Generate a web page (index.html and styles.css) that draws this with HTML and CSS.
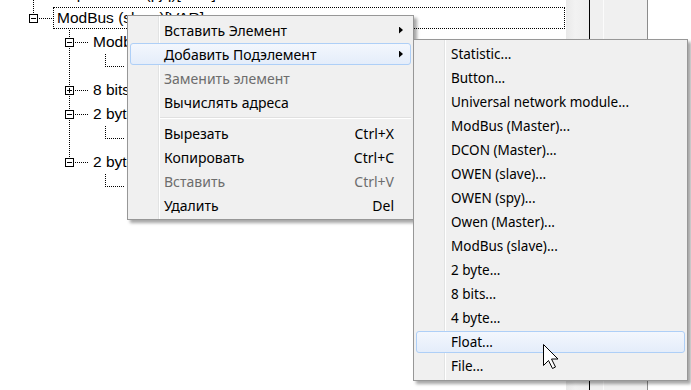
FILE: index.html
```html
<!DOCTYPE html>
<html lang="ru">
<head>
    <meta charset="UTF-8">
    <meta name="viewport" content="width=device-width, initial-scale=1.0">
    <title>Project tree</title>
    <link rel="stylesheet" href="styles.css">
</head>
<body>
    <div class="window">
        <div class="tree">
            <div class="rows">
                <div class="row">
                    <span class="cell tee"></span>
                    <span class="label">Порт COM1 (pjq)[VAR]</span>
                </div>
                <div class="row">
                    <span class="cell elbow"><i class="box"></i></span>
                    <span class="label selected">ModBus (slave)[VAR]</span>
                </div>
                <div class="row">
                    <span class="cell"></span>
                    <span class="cell tee"><i class="box"></i></span>
                    <span class="label">Modbus</span>
                </div>
                <div class="row">
                    <span class="cell"></span>
                    <span class="cell pipe"></span>
                    <span class="cell elbow"></span>
                    <span class="label"></span>
                </div>
                <div class="row">
                    <span class="cell"></span>
                    <span class="cell tee"><i class="box plus"></i></span>
                    <span class="label">8 bits</span>
                </div>
                <div class="row">
                    <span class="cell"></span>
                    <span class="cell tee"><i class="box"></i></span>
                    <span class="label">2 byte</span>
                </div>
                <div class="row">
                    <span class="cell"></span>
                    <span class="cell pipe"></span>
                    <span class="cell elbow"></span>
                    <span class="label"></span>
                </div>
                <div class="row">
                    <span class="cell"></span>
                    <span class="cell elbow"><i class="box"></i></span>
                    <span class="label">2 byte</span>
                </div>
                <div class="row">
                    <span class="cell"></span>
                    <span class="cell"></span>
                    <span class="cell elbow"></span>
                    <span class="label"></span>
                </div>
            </div>
        </div>
        <div class="strip scroll"></div>
        <div class="strip split"></div>
        <div class="strip panel"></div>
        <div class="strip blank"></div>
    </div>

    <!-- context menu -->
    <div class="menu main">
        <div class="item"><span class="text">Вставить Элемент</span><span class="more"></span></div>
        <div class="item hot"><span class="text">Добавить Подэлемент</span><span class="more"></span></div>
        <div class="item off"><span class="text">Заменить элемент</span><span class="none"></span></div>
        <div class="item"><span class="text">Вычислять адреса</span><span class="none"></span></div>
        <div class="sep"></div>
        <div class="item"><span class="text">Вырезать</span><span class="key">Ctrl+X</span><span class="none"></span></div>
        <div class="item"><span class="text">Копировать</span><span class="key">Ctrl+C</span><span class="none"></span></div>
        <div class="item off"><span class="text">Вставить</span><span class="key">Ctrl+V</span><span class="none"></span></div>
        <div class="item"><span class="text">Удалить</span><span class="key">Del</span><span class="none"></span></div>
    </div>

    <!-- submenu -->
    <div class="menu sub">
        <div class="item">Statistic...</div>
        <div class="item">Button...</div>
        <div class="item">Universal network module...</div>
        <div class="item">ModBus (Master)...</div>
        <div class="item">DCON (Master)...</div>
        <div class="item">OWEN (slave)...</div>
        <div class="item">OWEN (spy)...</div>
        <div class="item">Owen (Master)...</div>
        <div class="item">ModBus (slave)...</div>
        <div class="item">2 byte...</div>
        <div class="item">8 bits...</div>
        <div class="item">4 byte...</div>
        <div class="item hot">Float...</div>
        <div class="item">File...</div>
    </div>

    <svg class="cursor" width="17" height="26" viewBox="0 0 17 26">
        <path d="M0.5 0.5 L0.5 21.5 L5.5 16.5 L9.5 24.5 L12.5 23 L8.5 15 L15 15 Z" fill="#fff" stroke="#000" stroke-width="1" stroke-linejoin="miter"/>
    </svg>
</body>
</html>
```

FILE: styles.css
```css
body {
    margin: 0;
    font-family: "Liberation Sans", Arial, sans-serif;
    background-color: #fff;
    overflow: hidden;
}

.window {
    display: flex;
    height: 390px;
}

/* tree view */
.tree {
    flex: none;
    width: 566px;
    padding-left: 15px;
    box-sizing: border-box;
    overflow: hidden;
}

.rows {
    margin-top: -18px;
}

.row {
    display: flex;
    align-items: center;
    height: 24px;
}

.cell {
    flex: none;
    width: 36px;
    height: 24px;
    display: flex;
    align-items: flex-start;
    background-repeat: no-repeat;
}

.cell.tee,
.cell.elbow {
    width: 38px;
}

.pipe {
    background-image: repeating-linear-gradient(to bottom, #000 0 1px, transparent 1px 2px);
    background-size: 1px 24px;
    background-position: 18px 0;
}

.tee {
    background-image:
        repeating-linear-gradient(to bottom, #000 0 1px, transparent 1px 2px),
        repeating-linear-gradient(to right, #000 0 1px, transparent 1px 2px);
    background-size: 1px 24px, 20px 1px;
    background-position: 18px 0, 18px 12px;
}

.elbow {
    background-image:
        repeating-linear-gradient(to bottom, #000 0 1px, transparent 1px 2px),
        repeating-linear-gradient(to right, #000 0 1px, transparent 1px 2px);
    background-size: 1px 12px, 20px 1px;
    background-position: 18px 0, 18px 12px;
}

.box {
    width: 9px;
    height: 9px;
    margin: 8px 0 0 14px;
    box-sizing: border-box;
    border: 1px solid #000;
    background-color: #fff;
    display: grid;
    place-items: center;
}

.box::before {
    content: "";
    grid-area: 1 / 1;
    width: 5px;
    height: 1px;
    background-color: #000;
}

.box.plus::after {
    content: "";
    grid-area: 1 / 1;
    width: 1px;
    height: 5px;
    background-color: #000;
}

.label {
    font-size: 15.5px;
    line-height: 20px;
    padding: 0 3px;
    border: 1px dotted transparent;
    white-space: nowrap;
    color: #000;
}

.label.selected {
    flex: 1;
    margin-right: 1px;
    border-color: #000;
}

/* right side strips */
.strip {
    flex: none;
}

.scroll {
    width: 23px;
    background: linear-gradient(to right, #e9e9e9, #f2f2f2 40%, #ededed);
    border-right: 1px solid #000;
}

.split {
    width: 13px;
    background-color: #f0f0f0;
    border-right: 1px solid #fbfbfb;
}

.panel {
    width: 43px;
    background-color: #f0f0f0;
    border-right: 1px solid #8c8c8c;
}

.blank {
    flex: 1;
    background-color: #fff;
}

/* menus */
.menu {
    position: absolute;
    display: flex;
    flex-direction: column;
    box-sizing: border-box;
    padding: 2px;
    border: 1px solid #979797;
    background-color: #f0f0f0;
    background-image: linear-gradient(#e2e3e3, #e2e3e3), linear-gradient(#fff, #fff);
    background-size: 1px 100%, 1px 100%;
    background-position: 30px 0, 31px 0;
    background-repeat: no-repeat;
    box-shadow: 3px 3px 3px rgba(0, 0, 0, 0.35);
    font-family: "Noto Sans", "Segoe UI", sans-serif;
    font-size: 14px;
    color: #000;
}

.main {
    left: 127px;
    top: 15px;
    width: 287px;
}

.sub {
    left: 413px;
    top: 39px;
    width: 275px;
    font-size: 13.5px;
}

.item {
    display: flex;
    align-items: center;
    height: 22px;
    margin: 1px 0;
    padding-left: 33px;
    box-sizing: border-box;
    border: 1px solid transparent;
    border-radius: 3px;
    white-space: nowrap;
}

.sub .item {
    padding-left: 34px;
}

.item.hot {
    border-color: #aecff7;
    background: linear-gradient(#f3f7fd, #e4edfa);
}

.item.off {
    color: #6d6d6d;
}

.item .text {
    flex: 1;
}

.more,
.none {
    flex: none;
    width: 11px;
    margin-left: 5px;
}

.more::before {
    content: "";
    display: block;
    width: 4px;
    height: 7px;
    background-color: #000;
    clip-path: polygon(0 0, 100% 50%, 0 100%);
}

.sep {
    margin: 3px 0 2px 30px;
    border-top: 1px solid #e0e0e0;
    border-bottom: 1px solid #fff;
}

.cursor {
    position: absolute;
    left: 543px;
    top: 344px;
}
```
